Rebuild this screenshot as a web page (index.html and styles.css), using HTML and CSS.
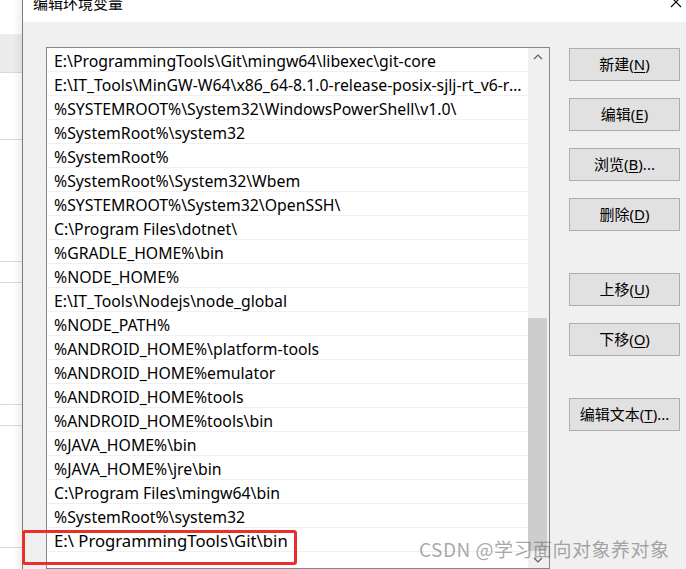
FILE: index.html
```html
<!DOCTYPE html>
<html lang="zh-CN">
<head>
    <meta charset="UTF-8">
    <meta name="viewport" content="width=device-width, initial-scale=1.0">
    <title>编辑环境变量</title>
    <link rel="stylesheet" href="styles.css">
</head>
<body>
    <div class="desktop">
        <div class="backwin">
            <div class="bw-seg bw-top"></div>
            <div class="bw-seg bw-band"></div>
            <div class="bw-seg bw-s2"></div>
            <div class="bw-seg bw-s3"></div>
            <div class="bw-seg bw-s4"></div>
            <div class="bw-seg bw-s3"></div>
            <div class="bw-seg bw-s4"></div>
            <div class="bw-seg bw-s3"></div>
            <div class="bw-seg bw-rest"></div>
        </div>

        <div class="dialog">
            <div class="titlebar">
                <span class="title">编辑环境变量</span>
                <svg class="close" width="12" height="12" viewBox="0 0 12 12">
                    <path d="M1 1 L11 11 M11 1 L1 11" stroke="#000" stroke-width="1.1" fill="none"/>
                </svg>
            </div>

            <div class="content">
                <div class="listbox">
                    <div class="rows">
                        <div class="row">E:\ProgrammingTools\Git\mingw64\libexec\git-core</div>
                        <div class="row">E:\IT_Tools\MinGW-W64\x86_64-8.1.0-release-posix-sjlj-rt_v6-rev0\mingw64\bin</div>
                        <div class="row">%SYSTEMROOT%\System32\WindowsPowerShell\v1.0\</div>
                        <div class="row">%SystemRoot%\system32</div>
                        <div class="row">%SystemRoot%</div>
                        <div class="row">%SystemRoot%\System32\Wbem</div>
                        <div class="row">%SYSTEMROOT%\System32\OpenSSH\</div>
                        <div class="row">C:\Program Files\dotnet\</div>
                        <div class="row">%GRADLE_HOME%\bin</div>
                        <div class="row">%NODE_HOME%</div>
                        <div class="row">E:\IT_Tools\Nodejs\node_global</div>
                        <div class="row">%NODE_PATH%</div>
                        <div class="row">%ANDROID_HOME%\platform-tools</div>
                        <div class="row">%ANDROID_HOME%emulator</div>
                        <div class="row">%ANDROID_HOME%tools</div>
                        <div class="row">%ANDROID_HOME%tools\bin</div>
                        <div class="row">%JAVA_HOME%\bin</div>
                        <div class="row">%JAVA_HOME%\jre\bin</div>
                        <div class="row">C:\Program Files\mingw64\bin</div>
                        <div class="row">%SystemRoot%\system32</div>
                        <div class="row row-new">E:\ ProgrammingTools\Git\bin</div>
                        <div class="row"></div>
                    </div>
                    <div class="scrollbar">
                        <div class="sb-btn">
                            <svg width="10" height="6" viewBox="0 0 10 6"><path d="M1 5 L5 1 L9 5" stroke="#606060" stroke-width="1.2" fill="none"/></svg>
                        </div>
                        <div class="sb-track">
                            <div class="sb-thumb"></div>
                        </div>
                        <div class="sb-btn">
                            <svg width="10" height="6" viewBox="0 0 10 6"><path d="M1 1 L5 5 L9 1" stroke="#606060" stroke-width="1.2" fill="none"/></svg>
                        </div>
                    </div>
                </div>

                <div class="buttons">
                    <button class="btn">新建(<u>N</u>)</button>
                    <button class="btn">编辑(<u>E</u>)</button>
                    <button class="btn">浏览(<u>B</u>)...</button>
                    <button class="btn">删除(<u>D</u>)</button>
                    <button class="btn btn-gap">上移(<u>U</u>)</button>
                    <button class="btn">下移(<u>O</u>)</button>
                    <button class="btn btn-gap">编辑文本(<u>T</u>)...</button>
                </div>
            </div>
        </div>

        <div class="highlight"></div>
        <div class="watermark">CSDN @学习面向对象养对象</div>
    </div>
</body>
</html>
```

FILE: styles.css
```css
html, body {
    margin: 0;
    padding: 0;
    overflow: hidden;
}

body {
    font-family: "Noto Sans", "Noto Sans CJK SC", sans-serif;
    background-color: #f0f0f0;
    color: #000;
}

.desktop {
    position: relative;
    display: flex;
    width: 686px;
    height: 569px;
    overflow: hidden;
}

/* window behind the dialog */
.backwin {
    position: relative;
    width: 22px;
    flex-shrink: 0;
    display: flex;
    flex-direction: column;
    background-color: #fff;
}

.backwin::after {
    content: "";
    position: absolute;
    top: 0;
    right: 0;
    bottom: 0;
    width: 9px;
    background: linear-gradient(to right, rgba(0, 0, 0, 0), rgba(0, 0, 0, 0.06));
}

.bw-seg {
    box-sizing: border-box;
    border-bottom: 1px solid #d9d9d9;
}

.bw-top {
    height: 34px;
    border-bottom: none;
}

.bw-band {
    height: 39px;
    background-color: #ececec;
}

.bw-s2 {
    height: 67px;
}

.bw-s3 {
    height: 122px;
}

.bw-s4 {
    height: 21px;
}

.bw-rest {
    flex: 1;
    border-bottom: none;
}

/* dialog */
.dialog {
    flex: 1;
    display: flex;
    flex-direction: column;
    border-left: 1px solid #7d7d7d;
}

.titlebar {
    position: relative;
    height: 22px;
    background-color: #fff;
    overflow: hidden;
}

.title {
    display: block;
    margin: -6px 0 0 10px;
    font-family: "Noto Sans CJK SC", sans-serif;
    font-size: 15px;
    line-height: 18px;
}

.close {
    position: absolute;
    top: -4px;
    left: 647px;
}

.content {
    flex: 1;
    display: flex;
    gap: 19px;
    padding: 25px 0 0 23px;
}

.listbox {
    box-sizing: border-box;
    display: flex;
    width: 504px;
    height: 522px;
    flex-shrink: 0;
    background-color: #fff;
    border: 1px solid #828790;
}

.rows {
    width: 481px;
    overflow: hidden;
}

.row {
    box-sizing: border-box;
    height: 24px;
    padding: 0 5px 0 7px;
    border-bottom: 1px solid #f0f0f0;
    font-size: 15.8px;
    line-height: 26px;
    white-space: nowrap;
    overflow: hidden;
    text-overflow: ellipsis;
}

/* the freshly typed entry renders a little larger in the shot */
.row-new {
    font-size: 16.7px;
    line-height: 26px;
}

.scrollbar {
    width: 21px;
    display: flex;
    flex-direction: column;
    background-color: #f0f0f0;
}

.sb-btn {
    height: 17px;
    display: flex;
    align-items: center;
    justify-content: center;
    padding-right: 2px;
}

.sb-track {
    flex: 1;
}

.sb-thumb {
    width: 19px;
    height: 233px;
    margin-top: 253px;
    background-color: #cdcdcd;
}

.buttons {
    display: flex;
    flex-direction: column;
    gap: 17px;
    margin-top: 1px;
}

.btn {
    box-sizing: border-box;
    width: 111px;
    height: 33px;
    padding: 0 0 2px;
    background-color: #e1e1e1;
    border: 1px solid #adadad;
    border-radius: 0;
    font-family: "Noto Sans", "Noto Sans CJK SC", sans-serif;
    font-size: 15px;
    line-height: 20px;
    color: #000;
}

.btn u {
    text-underline-offset: 2px;
}

.btn-gap {
    margin-top: 25px;
}

/* overlays from the screenshot */
.highlight {
    position: absolute;
    left: 22px;
    top: 530px;
    width: 275px;
    height: 35px;
    box-sizing: border-box;
    border: 3px solid #e8302a;
    border-radius: 3px;
}

.watermark {
    position: absolute;
    left: 419px;
    top: 537px;
    font-family: "Noto Sans CJK SC", sans-serif;
    font-size: 19px;
    line-height: 24px;
    color: rgba(110, 110, 110, 0.6);
    letter-spacing: 0.5px;
}
```
